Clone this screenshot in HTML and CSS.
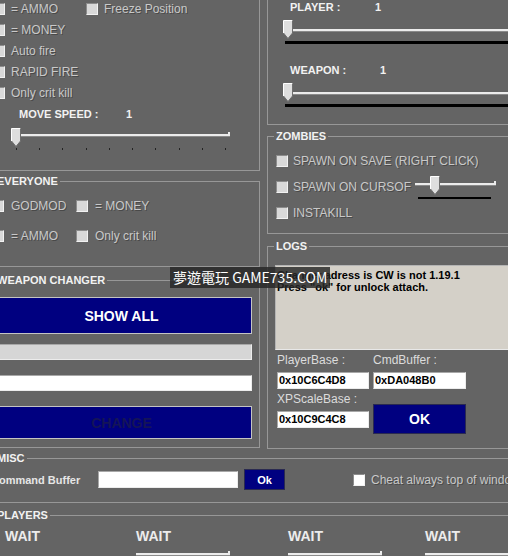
FILE: index.html
```html
<!DOCTYPE html>
<html lang="en">
<head>
<meta charset="utf-8">
<title>Trainer</title>
<link rel="stylesheet" href="styles.css">
</head>
<body>
<div class="app">
  <div class="top">
    <div class="col col-left">
      <div class="box box-main">
        <div class="row">
          <label class="chk w93"><span class="cb"></span>= AMMO</label>
          <label class="chk"><span class="cb"></span>Freeze Position</label>
        </div>
        <div class="row"><label class="chk"><span class="cb"></span>= MONEY</label></div>
        <div class="row"><label class="chk"><span class="cb"></span>Auto fire</label></div>
        <div class="row"><label class="chk"><span class="cb"></span>RAPID FIRE</label></div>
        <div class="row"><label class="chk"><span class="cb"></span>Only crit kill</label></div>
        <div class="speed-row"><span class="hdr speed-label">MOVE SPEED :</span><span class="hdr">1</span></div>
        <div class="slider speed-slider">
          <div class="track speed-track"></div>
          <div class="ticks"><i></i><i></i><i></i><i></i><i></i><i></i><i></i><i></i><i></i><i></i></div>
          <svg class="thumb" viewBox="0 0 10 19"><path d="M0.5 0.5H9.5V13L5 18.5L0.5 13Z" fill="#dedede"/><path d="M0.5 13V0.5H9.5" fill="none" stroke="#fff"/><path d="M9.5 0.5V13L5 18.5L0.5 13" fill="none" stroke="#6e6e6e"/></svg>
        </div>
      </div>
      <fieldset class="grp grp-everyone">
        <legend>EVERYONE</legend>
        <div class="ev-grid">
          <label class="chk"><span class="cb"></span>GODMOD</label>
          <label class="chk"><span class="cb"></span>= MONEY</label>
          <label class="chk"><span class="cb"></span>= AMMO</label>
          <label class="chk"><span class="cb"></span>Only crit kill</label>
        </div>
      </fieldset>
      <fieldset class="grp grp-weapon">
        <legend>WEAPON CHANGER</legend>
        <div class="wc">
          <button class="navy big">SHOW ALL</button>
          <div class="tb tb-disabled"></div>
          <div class="tb tb-white"></div>
          <button class="navy change">CHANGE</button>
        </div>
      </fieldset>
    </div>
    <div class="col col-right">
      <div class="box box-top">
        <div class="vrow"><span class="hdr vl-player">PLAYER :</span><span class="hdr">1</span></div>
        <div class="slider pslider">
          <div class="track ptrack"></div>
          <div class="blackline"></div>
          <svg class="thumb" viewBox="0 0 10 19"><path d="M0.5 0.5H9.5V13L5 18.5L0.5 13Z" fill="#dedede"/><path d="M0.5 13V0.5H9.5" fill="none" stroke="#fff"/><path d="M9.5 0.5V13L5 18.5L0.5 13" fill="none" stroke="#6e6e6e"/></svg>
        </div>
        <div class="vrow mt19"><span class="hdr vl-weapon">WEAPON :</span><span class="hdr">1</span></div>
        <div class="slider pslider">
          <div class="track ptrack"></div>
          <div class="blackline"></div>
          <svg class="thumb" viewBox="0 0 10 19"><path d="M0.5 0.5H9.5V13L5 18.5L0.5 13Z" fill="#dedede"/><path d="M0.5 13V0.5H9.5" fill="none" stroke="#fff"/><path d="M9.5 0.5V13L5 18.5L0.5 13" fill="none" stroke="#6e6e6e"/></svg>
        </div>
      </div>
      <fieldset class="grp grp-zombies">
        <legend>ZOMBIES</legend>
        <div class="zlist">
          <div class="zrow"><label class="chk"><span class="cb"></span>SPAWN ON SAVE (RIGHT CLICK)</label></div>
          <div class="zrow">
            <label class="chk w137"><span class="cb"></span>SPAWN ON CURSOF</label>
            <div class="slider zslider">
              <div class="track ztrack"></div>
              <div class="blackline zblack"></div>
              <svg class="thumb" viewBox="0 0 10 19"><path d="M0.5 0.5H9.5V13L5 18.5L0.5 13Z" fill="#dedede"/><path d="M0.5 13V0.5H9.5" fill="none" stroke="#fff"/><path d="M9.5 0.5V13L5 18.5L0.5 13" fill="none" stroke="#6e6e6e"/></svg>
            </div>
          </div>
          <div class="zrow"><label class="chk"><span class="cb"></span>INSTAKILL</label></div>
        </div>
      </fieldset>
      <fieldset class="grp grp-logs">
        <legend>LOGS</legend>
        <div class="logs">
          <div class="logbox">Changer adress is CW is not 1.19.1<br>Press "ok" for unlock attach.</div>
          <div class="fields">
            <div class="fcol fcol-l">
              <div class="flabel">PlayerBase :</div>
              <div class="tb tbv">0x10C6C4D8</div>
              <div class="flabel mt3">XPScaleBase :</div>
              <div class="tb tbv">0x10C9C4C8</div>
            </div>
            <div class="fcol fcol-r">
              <div class="flabel">CmdBuffer :</div>
              <div class="tb tbv">0xDA048B0</div>
              <button class="navy ok">OK</button>
            </div>
          </div>
        </div>
      </fieldset>
    </div>
  </div>
  <fieldset class="grp grp-misc">
    <legend>MISC</legend>
    <div class="misc">
      <span class="cmd-label">Command Buffer</span>
      <div class="tb cmd-tb"></div>
      <button class="navy okbtn">Ok</button>
      <label class="chk topchk"><span class="cb cb-white"></span>Cheat always top of window</label>
    </div>
  </fieldset>
  <fieldset class="grp grp-players">
    <legend>PLAYERS</legend>
    <div class="players">
      <span class="wait">WAIT</span>
      <span class="wait">WAIT</span>
      <span class="wait">WAIT</span>
      <span class="wait">WAIT</span>
      <span></span>
      <div class="track pl-track"></div>
      <div class="track pl-track"></div>
      <div class="track pl-track"></div>
    </div>
  </fieldset>
</div>
<div class="wm">夢遊電玩 GAME735.COM</div>
</body>
</html>
```
FILE: styles.css
```css
* { box-sizing: border-box; }
html, body { margin: 0; padding: 0; overflow: hidden; }
body {
  position: relative;
  width: 508px;
  height: 556px;
  background: #646464;
  font-family: "Liberation Sans", Arial, sans-serif;
  font-size: 12px;
  color: #c9c9c9;
}
.app { margin-left: -12px; width: 552px; }
.top { display: flex; align-items: flex-start; }
.col { display: flex; flex-direction: column; flex: none; }
.col-left { width: 272px; }
.col-right { width: 273px; margin-left: 7px; }

.box { border: 1px solid #979797; }
.grp { margin: 0; padding: 0; min-width: 0; border: 1px solid #979797; }
.grp legend {
  margin-left: 6px;
  padding: 0 2px;
  font-size: 11px;
  line-height: 13px;
  font-weight: bold;
  color: #f2f2f2;
}
.hdr { font-size: 11px; font-weight: bold; color: #f2f2f2; }

.chk {
  display: flex;
  align-items: center;
  gap: 6px;
  white-space: nowrap;
  text-shadow: 1px 1px 0 rgba(40, 40, 40, 0.45);
}
.cb {
  flex: none;
  width: 12px;
  height: 12px;
  background: #d9d9d9;
  border: 1px solid;
  border-color: #8c8c8c #f2f2f2 #f2f2f2 #8c8c8c;
}
.cb-white { background: #fff; }

/* left top box */
.box-main { margin-top: -12px; padding: 9px 7px 19px 4px; }
.row { height: 21px; display: flex; align-items: center; }
.w93 { width: 93px; }
.speed-row { height: 22px; display: flex; align-items: center; padding-left: 26px; }
.speed-label { width: 107px; }

.slider { position: relative; display: flow-root; }
.track {
  position: relative;
  height: 3px;
  background: #ececec;
  border-bottom: 1px solid #8a8a8a;
}
.track::after {
  content: "";
  position: absolute;
  right: 0;
  top: -2px;
  width: 2px;
  height: 3px;
  background: #ececec;
}
.thumb { position: absolute; left: 0; top: 3px; width: 10px; height: 19px; }
.speed-slider { height: 26px; width: 221px; margin-left: 18px; }
.speed-track { margin: 9px 0 0 6px; width: 213px; }
.ticks { display: flex; justify-content: space-between; margin: 11px 0 0 5px; width: 210px; }
.ticks i { width: 1px; height: 2px; background: #222; }

/* everyone */
.grp-everyone { margin-top: 4px; }
.ev-grid {
  display: grid;
  grid-template-columns: 84px auto;
  grid-auto-rows: 30px;
  align-items: center;
  padding: 3px 0 15px 3px;
}
.ev-grid .chk { gap: 7px; }

/* weapon changer */
.grp-weapon { margin-top: 7px; }
.wc { display: flex; flex-direction: column; padding: 10px 7px 8px 2px; }
.navy {
  display: flex;
  align-items: center;
  justify-content: center;
  margin: 0;
  padding: 0;
  background: #000080;
  border: 1px solid #c4c4c4;
  color: #fff;
  font-family: inherit;
  font-weight: bold;
  font-size: 14px;
}
.big { height: 37px; }
.change { height: 33px; margin-top: 15px; color: #141458; }
.tb {
  height: 16px;
  border: 1px solid;
  border-color: #a8a8a8 #ececec #ececec #a8a8a8;
  background: #fff;
}
.tb-disabled { background: #d6d6d6; margin-top: 10px; }
.tb-white { margin-top: 15px; }

/* right top box */
.box-top { margin-top: -12px; padding: 11px 0 17px 0; }
.vrow { height: 14px; display: flex; align-items: center; padding-left: 22px; }
.vl-player { width: 85px; }
.vl-weapon { width: 90px; }
.mt19 { margin-top: 19px; }
.pslider { height: 30px; }
.ptrack { margin: 15px 0 0 22px; }
.blackline { height: 3px; background: #000; margin: 9px 0 0 17px; }
.pslider .thumb { left: 15px; top: 6px; }

/* zombies */
.grp-zombies { margin-top: 5px; }
.zlist { padding: 5px 0 7px 8px; }
.zrow { height: 26px; display: flex; align-items: center; }
.zrow .chk { gap: 5px; }
.w137 { width: 137px; }
.zslider { width: 83px; height: 26px; }
.ztrack { margin: 9px 0 0 2px; width: 81px; }
.zblack { height: 2px; margin: 11px 0 0 5px; width: 73px; }
.zslider .thumb { left: 17px; top: 2px; }

/* logs */
.grp-logs { margin-top: 6px; }
.logs { padding: 12px 0 14px 7px; }
.logbox {
  height: 85px;
  background: #d4d0c8;
  border: 1px solid;
  border-color: #b4b4b4 #e8e8e8 #e8e8e8 #b4b4b4;
  padding: 3px 0 0 1px;
  color: #000;
  font-weight: bold;
  font-size: 11px;
  line-height: 12px;
}
.fields { display: flex; gap: 4px; margin-top: 3px; padding-left: 2px; }
.fcol { display: flex; flex-direction: column; }
.fcol-l { width: 92px; }
.fcol-r { width: 93px; }
.flabel { height: 14px; line-height: 14px; font-size: 12px; color: #dcdcdc; white-space: nowrap; }
.mt3 { margin-top: 3px; }
.tbv {
  height: 17px;
  margin-top: 5px;
  padding-left: 1px;
  font-weight: bold;
  font-size: 11px;
  line-height: 15px;
  color: #000;
}
.ok { height: 30px; margin-top: 15px; border-color: #2a2a50; }

/* misc */
.grp-misc { margin-top: 3px; }
.misc { display: flex; align-items: center; height: 37px; padding: 4px 0 12px 2px; }
.cmd-label { width: 107px; flex: none; font-size: 11px; font-weight: bold; color: #e6e6e6; white-space: nowrap; }
.cmd-tb { width: 140px; height: 17px; flex: none; }
.okbtn { width: 41px; height: 21px; flex: none; margin-left: 6px; font-size: 11px; border-color: #2a2a50; }
.topchk { margin-left: 68px; }

/* players */
.grp-players { margin-top: 6px; }
.players {
  display: grid;
  grid-template-columns: 131px 152px 137px 120px;
  padding: 6px 0 0 16px;
}
.wait { height: 16px; line-height: 16px; font-size: 14px; font-weight: bold; color: #ececec; }
.pl-track { margin-top: 9px; width: 94px; }

/* watermark overlay */
.wm {
  position: absolute;
  left: 170px;
  top: 267px;
  height: 21px;
  padding: 0 3px;
  background: rgba(38, 38, 38, 0.82);
  color: #fff;
  font-family: "Noto Sans CJK TC", "Liberation Sans", sans-serif;
  font-size: 14px;
  line-height: 21px;
  white-space: nowrap;
}
```
